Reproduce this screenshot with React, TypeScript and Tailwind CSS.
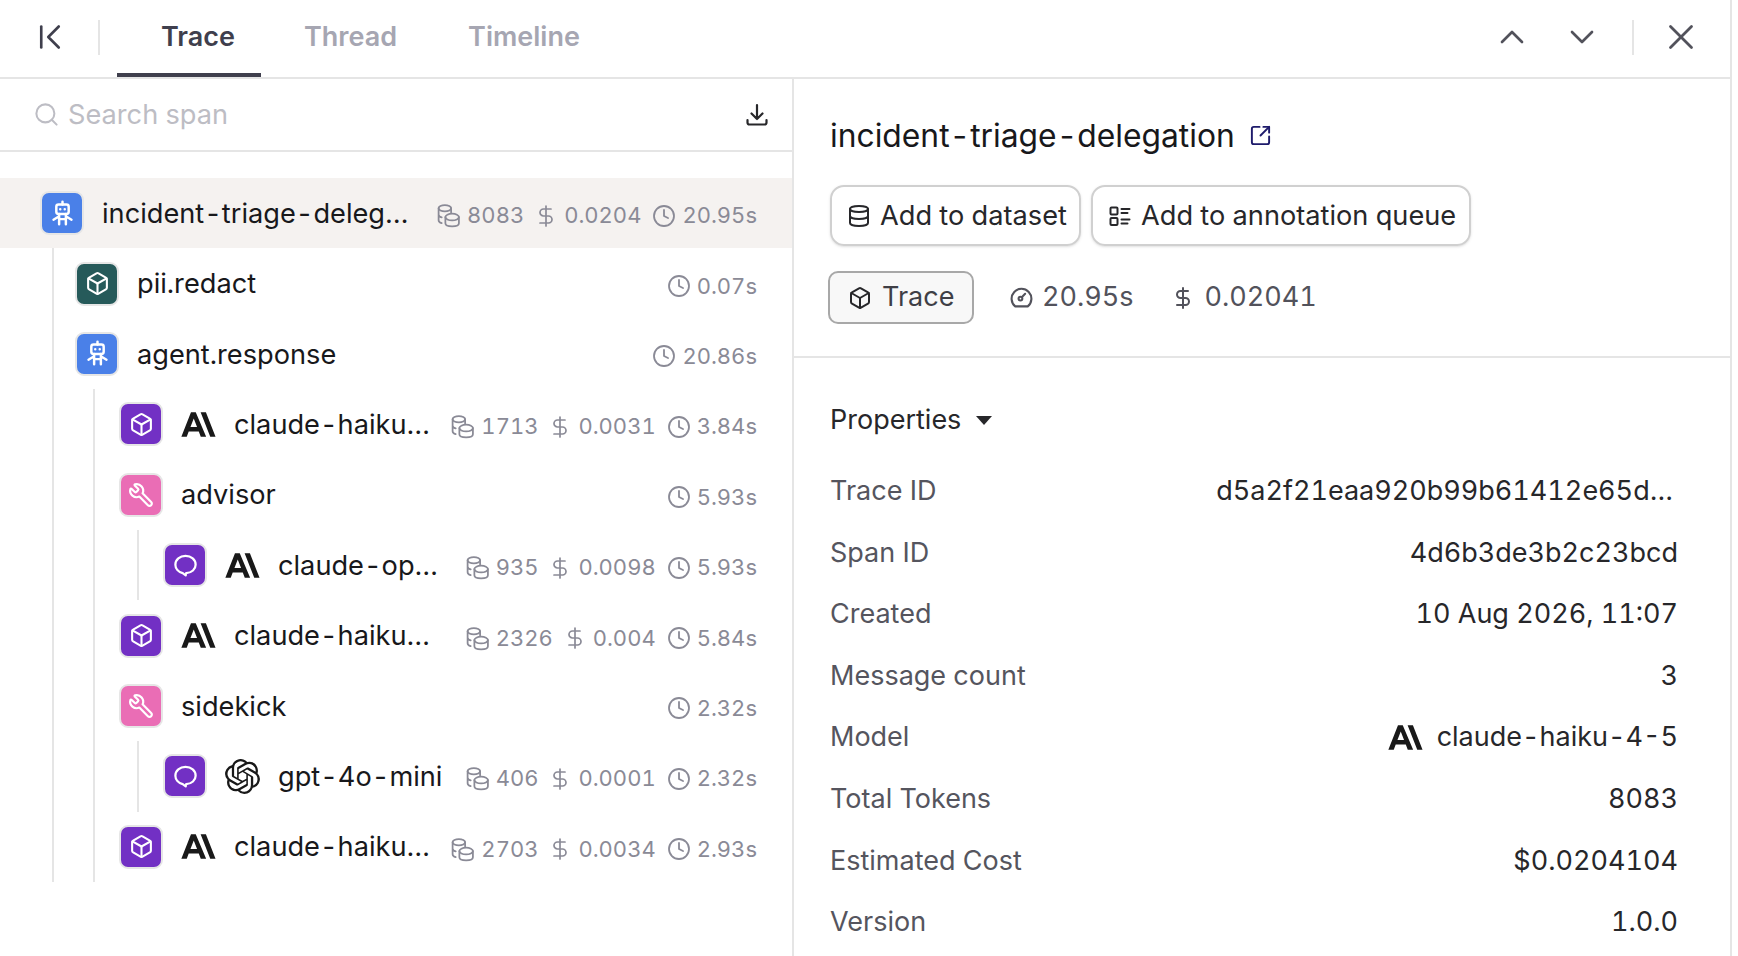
import { Box, ChevronDown, ChevronFirst, ChevronUp, Clock, Database, DollarSign, Search, SquareArrowOutUpRight, Wrench, X } from 'lucide-react';
import { SiOpenai } from 'react-icons/si';

function AnthropicLogo({ className }: { className?: string }) {
  return (
    <svg viewBox="0 0 46 32" fill="currentColor" className={className}>
      <path d="M32.73 0h-6.945L38.45 32h6.945L32.73 0ZM13.125 0 .46 32h7.082l2.59-6.72h13.25l2.59 6.72h7.082L19.39 0h-6.265Zm-.702 19.337 4.334-11.246 4.334 11.246h-8.668Z" />
    </svg>
  );
}

function RobotIcon() {
  return (
    <svg viewBox="0 0 24 24" fill="none" stroke="currentColor" strokeWidth="2.2" strokeLinecap="round" strokeLinejoin="round" className="w-[27px] h-[27px]">
      <path d="M12 1.500v2.500" />
      <rect x="6.500" y="4" width="11" height="8.500" rx="2" />
      <path d="M10 8.200v.01M14 8.200v.01" />
      <path d="M9 12.500v9M15 12.500v9M9 17h6M9 14.500l-5 3M15 14.500l5 3" />
    </svg>
  );
}

function BubbleIcon() {
  return (
    <svg viewBox="0 0 24 24" fill="none" stroke="currentColor" strokeWidth="2" strokeLinecap="round" strokeLinejoin="round" className="w-[27px] h-[27px]">
      <path d="M12 3.500c-5 0-9 3.400-9 7.800 0 3.600 2.700 6.500 6.500 7.400l2.700 2 .4-2c4.900-.2 8.400-3.400 8.400-7.400 0-4.400-3.900-7.800-9-7.800Z" />
    </svg>
  );
}

function CoinsIcon() {
  return (
    <svg viewBox="0 0 24 24" fill="none" stroke="currentColor" strokeWidth="1.7" strokeLinecap="round" strokeLinejoin="round" className="w-[25px] h-[25px] shrink-0">
      <ellipse cx="8.500" cy="5" rx="6" ry="3" />
      <path d="M2.500 5v11.500c0 1.300 1.200 2.300 3 2.800M2.500 11c0 1.300 1.200 2.300 3 2.800M14.500 5v4" />
      <ellipse cx="15.500" cy="13.500" rx="6.500" ry="3.200" />
      <path d="M9 13.500v6c0 1.800 2.900 3 6.500 3s6.500-1.200 6.500-3v-6" />
    </svg>
  );
}

function GaugeIcon() {
  return (
    <svg viewBox="0 0 24 24" fill="none" stroke="currentColor" strokeWidth="2" strokeLinecap="round" strokeLinejoin="round" className="w-[25px] h-[25px]">
      <path d="M6 20.500a9.500 9.500 0 1 1 12 0Z" />
      <circle cx="11" cy="13" r="1.800" />
      <path d="M12.500 11.500 15.500 8.500" />
    </svg>
  );
}

function QueueIcon() {
  return (
    <svg viewBox="0 0 24 24" fill="none" stroke="currentColor" strokeWidth="2" strokeLinejoin="round" strokeLinecap="round" className="w-[24px] h-[24px]">
      <rect x="2.500" y="3.500" width="7" height="7" rx="1" />
      <rect x="2.500" y="14" width="7" height="7" rx="1" />
      <path d="M13.500 5h8M13.500 9h6M13.500 15.500h8M13.500 19.500h6" />
    </svg>
  );
}

function DownloadIcon() {
  return (
    <svg viewBox="0 0 24 24" fill="none" stroke="currentColor" strokeWidth="2.200" strokeLinecap="round" strokeLinejoin="round" className="w-[24px] h-[24px]">
      <path d="M12 2v14M6.500 10.500 12 16l5.500-5.500M2.500 17v2.500a2 2 0 0 0 2 2h15a2 2 0 0 0 2-2V17" />
    </svg>
  );
}

type Kind = 'agent' | 'redact' | 'llm' | 'tool' | 'chat';

const kinds: Record<Kind, string> = {
  agent: 'bg-[#4a80e8]',
  redact: 'bg-[#265a5a]',
  llm: 'bg-[#7230c4]',
  tool: 'bg-[#ea6db5]',
  chat: 'bg-[#7230c4]',
};

function SpanIcon({ kind }: { kind: Kind }) {
  return (
    <div className={`w-[44px] h-[44px] shrink-0 rounded-[9px] border-2 border-[#e6e6e6] text-white flex items-center justify-center ${kinds[kind]}`}>
      {kind === 'agent' && <RobotIcon />}
      {(kind === 'redact' || kind === 'llm') && <Box size={25} strokeWidth={2} />}
      {kind === 'tool' && <Wrench size={26} strokeWidth={2} className="-scale-x-100" />}
      {kind === 'chat' && <BubbleIcon />}
    </div>
  );
}

type SpanProps = {
  kind: Kind;
  name: string;
  vendor?: 'anthropic' | 'openai';
  tokens?: string;
  cost?: string;
  time: string;
  inset: string;
  selected?: boolean;
};

function SpanRow({ kind, name, vendor, tokens, cost, time, inset, selected }: SpanProps) {
  return (
    <div className={`h-[70.4px] flex items-center pr-[35px] ${inset} ${selected ? 'bg-[#f5f2f0]' : ''}`}>
      <SpanIcon kind={kind} />
      {vendor === 'anthropic' && <AnthropicLogo className="w-[35px] h-[25px] ml-[18px] text-[#191919] shrink-0" />}
      {vendor === 'openai' && <SiOpenai className="w-[35px] h-[35px] ml-[18px] text-[#191919] shrink-0" />}
      <span className="ml-[18px] pt-[2px] text-[27.200px] text-[#18181b] whitespace-nowrap">{name}</span>
      <div className="ml-auto flex items-center pt-[5px] text-[22px] text-[#8a8a96]">
        {tokens && (
          <div className="flex items-center gap-[6px] mr-[10px]">
            <CoinsIcon />
            <span>{tokens}</span>
          </div>
        )}
        {cost && (
          <div className="flex items-center gap-[6px] mr-[11px]">
            <DollarSign size={24} strokeWidth={1.7} />
            <span>{cost}</span>
          </div>
        )}
        <div className="flex items-center gap-[6px]">
          <Clock size={24} strokeWidth={1.8} />
          <span>{time}</span>
        </div>
      </div>
    </div>
  );
}

const properties = [
  { label: 'Trace ID', value: 'd5a2f21eaa920b99b61412e65d…', extra: 'pr-[5px]' },
  { label: 'Span ID', value: '4d6b3de3b2c23bcd' },
  { label: 'Created', value: '10 Aug 2026, 11:07' },
  { label: 'Message count', value: '3' },
  { label: 'Model', value: 'claude-haiku-4-5', logo: true },
  { label: 'Total Tokens', value: '8083' },
  { label: 'Estimated Cost', value: '$0.0204104' },
  { label: 'Version', value: '1.0.0' },
];

export default function App() {
  return (
    <div className="w-[1738px] h-[956px] overflow-hidden bg-white font-['Inter',sans-serif] tabular-nums antialiased">
      <div className="w-[1732px] h-full border-r-2 border-[#e5e5e5] flex flex-col">
        <header className="h-[79px] shrink-0 flex items-center border-b-2 border-[#e5e5e5]">
          <ChevronFirst size={42} strokeWidth={1.5} className="ml-[29px] mb-[3px] text-[#3f3f4d]" />
          <div className="w-[2px] h-[35px] mb-[3px] bg-[#e5e5e5] ml-[27px]" />
          <nav className="flex h-full ml-[17px]">
            <button className="relative w-[144px] pl-[18px] pb-[3px] font-semibold text-[27px] text-[#3f3f4d]">
              Trace
              <span className="absolute left-0 right-0 bottom-0 h-[4px] bg-[#3f3f4d]" />
            </button>
            <span className="ml-[43px] pb-[3px] flex items-center font-semibold text-[27px] text-[#a6a6b2]">Thread</span>
            <span className="ml-[71px] pb-[3px] flex items-center font-semibold text-[27px] text-[#a6a6b2]">Timeline</span>
          </nav>
          <div className="ml-auto mb-[3px] flex items-center text-[#52525b]">
            <ChevronUp size={40} strokeWidth={1.6} />
            <ChevronDown size={40} strokeWidth={1.6} className="ml-[30px]" />
            <div className="w-[2px] h-[35px] bg-[#e5e5e5] ml-[30px]" />
            <X size={42} strokeWidth={1.6} className="ml-[26px] mr-[28px]" />
          </div>
        </header>

        <div className="flex flex-1 min-h-0">
          <aside className="w-[794px] shrink-0 border-r-2 border-[#e5e5e5]">
            <div className="h-[73px] flex items-center border-b-2 border-[#e5e5e5] pl-[33px] pr-[23px]">
              <Search size={27} strokeWidth={1.8} className="text-[#bdbdc4]" />
              <span className="ml-[8px] pt-[2px] text-[27.200px] text-[#bdbdc4]">Search span</span>
              <div className="ml-auto text-[#27272a]">
                <DownloadIcon />
              </div>
            </div>
            <div className="pt-[26px]">
              <SpanRow selected kind="agent" inset="pl-[40px]" name="incident-triage-deleg…" tokens="8083" cost="0.0204" time="20.95s" />
              <div className="ml-[52px] border-l-2 border-[#e5e5e5]">
                <SpanRow kind="redact" inset="pl-[21px]" name="pii.redact" time="0.07s" />
                <SpanRow kind="agent" inset="pl-[21px]" name="agent.response" time="20.86s" />
                <div className="ml-[39px] border-l-2 border-[#e5e5e5]">
                  <SpanRow kind="llm" inset="pl-[24px]" vendor="anthropic" name="claude-haiku…" tokens="1713" cost="0.0031" time="3.84s" />
                  <SpanRow kind="tool" inset="pl-[24px]" name="advisor" time="5.93s" />
                  <div className="ml-[42px] border-l-2 border-[#e5e5e5]">
                    <SpanRow kind="chat" inset="pl-[24px]" vendor="anthropic" name="claude-op…" tokens="935" cost="0.0098" time="5.93s" />
                  </div>
                  <SpanRow kind="llm" inset="pl-[24px]" vendor="anthropic" name="claude-haiku…" tokens="2326" cost="0.004" time="5.84s" />
                  <SpanRow kind="tool" inset="pl-[24px]" name="sidekick" time="2.32s" />
                  <div className="ml-[42px] border-l-2 border-[#e5e5e5]">
                    <SpanRow kind="chat" inset="pl-[24px]" vendor="openai" name="gpt-4o-mini" tokens="406" cost="0.0001" time="2.32s" />
                  </div>
                  <SpanRow kind="llm" inset="pl-[24px]" vendor="anthropic" name="claude-haiku…" tokens="2703" cost="0.0034" time="2.93s" />
                </div>
              </div>
            </div>
          </aside>

          <main className="flex-1 min-w-0">
            <div className="h-[279px] border-b-2 border-[#e5e5e5] pl-[36px] pt-[33px]">
              <div className="flex items-center">
                <h1 className="text-[31.800px] text-[#18181b] font-normal">incident-triage-delegation</h1>
                <SquareArrowOutUpRight size={23} strokeWidth={2} className="ml-[14px] text-[#1e1b6b]" />
              </div>
              <div className="flex gap-[10px] mt-[25.500px]">
                <button className="h-[61px] w-[251px] rounded-[14px] border-2 border-[#d0d0d0] shadow-sm flex items-center pl-[15px] text-[27.200px] text-[#27272a]">
                  <Database size={24} strokeWidth={2} />
                  <span className="ml-[9px] pt-[2px]">Add to dataset</span>
                </button>
                <button className="h-[61px] w-[380px] rounded-[14px] border-2 border-[#d0d0d0] shadow-sm flex items-center pl-[15px] text-[27.200px] text-[#27272a]">
                  <QueueIcon />
                  <span className="ml-[9px] pt-[2px]">Add to annotation queue</span>
                </button>
              </div>
              <div className="flex items-center mt-[25px] -ml-[2px] text-[#52525b]">
                <div className="h-[53px] w-[146px] rounded-[10px] border-2 border-[#a8a8a8] bg-[#f8f8f8] flex items-center pl-[18px] text-[27px] text-[#3f3f46]">
                  <Box size={24} strokeWidth={2} className="text-[#27272a]" />
                  <span className="ml-[10px]">Trace</span>
                </div>
                <div className="ml-[35px] flex items-center text-[27px]">
                  <GaugeIcon />
                  <span className="ml-[8px]">20.95s</span>
                </div>
                <div className="ml-[37px] flex items-center text-[27px]">
                  <DollarSign size={24} strokeWidth={2} />
                  <span className="ml-[10px]">0.02041</span>
                </div>
              </div>
            </div>

            <div className="pl-[36px] pr-[52px] pt-[42px]">
              <div className="flex items-center text-[27px] text-[#27272a]">
                Properties
                <span className="ml-[15px] w-0 h-0 border-x-[8px] border-x-transparent border-t-[9px] border-t-[#27272a]" />
              </div>
              <dl className="mt-[20px]">
                {properties.map((p) => (
                  <div key={p.label} className="h-[61.600px] flex items-center justify-between text-[27px]">
                    <dt className="text-[#55555e]">{p.label}</dt>
                    <dd className={`flex items-center text-[#27272a] ${p.extra ?? ''}`}>
                      {p.logo && <AnthropicLogo className="w-[35px] h-[25px] mr-[14px] text-[#191919]" />}
                      {p.value}
                    </dd>
                  </div>
                ))}
              </dl>
            </div>
          </main>
        </div>
      </div>
    </div>
  );
}
